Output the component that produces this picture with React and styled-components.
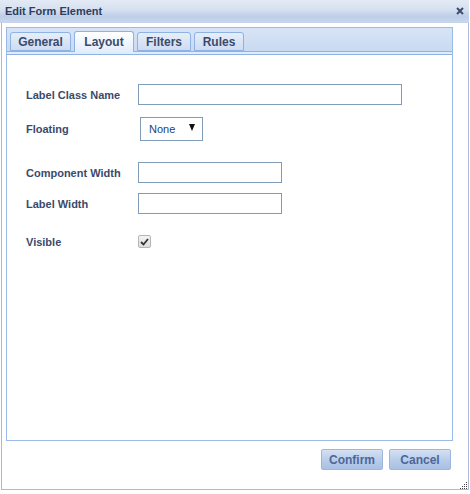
import React from "react";
import styled, { createGlobalStyle } from "styled-components";

const Global = createGlobalStyle`
  html, body { margin: 0; padding: 0; background: #fff; }
  body { font-family: "Liberation Sans", Arial, sans-serif; font-size: 11px; }
`;

const Window = styled.div`
  width: 469px;
  height: 490px;
  display: flex;
  flex-direction: column;
  box-sizing: border-box;
  position: relative;
`;

const TitleBar = styled.div`
  height: 22px;
  display: flex;
  align-items: center;
  justify-content: space-between;
  padding: 0 4px 0 5px;
  background: linear-gradient(#e3eaf5 0%, #d6e0f0 45%, #bdcee8 75%, #c9d7ed 100%);
  border-bottom: 1px solid #c7d5ea;
  color: #2e3d5c;
  font-weight: bold;
  font-size: 11px;
`;

const Close = styled.span`
  width: 8px;
  height: 8px;
  margin-right: 1px;
  display: flex;
`;

const Frame = styled.div`
  flex: 1;
  margin: 0 0 0 1px;
  border: 1px solid #a9bad3;
  border-top: none;
  display: flex;
  flex-direction: column;
  padding: 4px 15px 0 4px;
  background: #fff;
`;

const TabPanel = styled.div`
  height: 412px;
  display: flex;
  flex-direction: column;
  border: 1px solid #99bbe8;
`;

const Strip = styled.div`
  height: 21px;
  padding: 2px 0 0 3px;
  display: flex;
  align-items: flex-end;
  gap: 3px;
  background: linear-gradient(#d7e4f5, #c9daf2);
  border-bottom: 1px solid #8db2e3;
`;

const Tab = styled.div`
  width: ${(p) => p.$w}px;
  height: ${(p) => (p.$active ? "21px" : "19px")};
  margin-bottom: ${(p) => (p.$active ? "-1px" : "0")};
  display: flex;
  align-items: center;
  justify-content: center;
  box-sizing: border-box;
  border: 1px solid #8db2e3;
  border-bottom: ${(p) => (p.$active ? "none" : "1px solid #8db2e3")};
  border-radius: 3px 3px 0 0;
  background: ${(p) =>
    p.$active
      ? "linear-gradient(#ffffff, #e3edfb)"
      : "linear-gradient(#e6eefa, #cddcf3)"};
  color: #3b4a6a;
  font-weight: bold;
  font-size: 12px;
`;

const Spacer = styled.div`
  height: 2px;
  background: #deecfd;
  border-bottom: 1px solid #8db2e3;
`;

const Body = styled.div`
  flex: 1;
  padding: 29px 0 0 19px;
  display: flex;
  flex-direction: column;
`;

const Row = styled.div`
  display: flex;
  align-items: center;
  height: ${(p) => p.$h}px;
  margin-bottom: ${(p) => p.$mb || 0}px;
`;

const Label = styled.label`
  width: 112px;
  color: #3b4a6a;
  font-weight: bold;
  font-size: 11px;
`;

const Input = styled.input`
  width: ${(p) => p.$w}px;
  height: 21px;
  box-sizing: border-box;
  border: 1px solid #7f9db9;
  padding: 0 3px;
  margin: 0;
  outline: none;
  font: 11px "Liberation Sans", Arial, sans-serif;
`;

const Select = styled.div`
  width: 63px;
  height: 24px;
  margin-left: 2px;
  box-sizing: border-box;
  border: 1px solid #7f9db9;
  display: flex;
  align-items: center;
  justify-content: space-between;
  padding: 0 7px 1px 8px;
  color: #1e3f7c;
  font-size: 11px;
`;

const Arrow = styled.span`
  width: 0;
  height: 0;
  border-left: 3.5px solid transparent;
  border-right: 3.5px solid transparent;
  border-top: 7px solid #111;
  margin-top: -2px;
`;

const Check = styled.span`
  width: 11px;
  height: 11px;
  border: 1px solid #b5b5b5;
  border-radius: 2px;
  background: linear-gradient(#f4f4f4, #dcdcdc);
  display: flex;
  align-items: center;
  justify-content: center;
`;

const Footer = styled.div`
  display: flex;
  justify-content: flex-end;
  gap: 6px;
  padding: 8px 2px 0 0;
`;

const Button = styled.button`
  width: 62px;
  height: 21px;
  border: 1px solid #9fb6dc;
  border-radius: 2px;
  background: linear-gradient(#d5e1f3 0%, #bccfeb 45%, #a9c0e4 100%);
  color: #4d6699;
  font: bold 12px "Liberation Sans", Arial, sans-serif;
  padding: 0;
`;

const Grip = styled.svg`
  position: absolute;
  right: 1px;
  bottom: 1px;
`;

export default function App() {
  return (
    <>
      <Global />
      <Window>
        <TitleBar>
          <span>Edit Form Element</span>
          <Close>
            <svg width="8" height="8" viewBox="0 0 8 8">
              <path d="M1 1 L7 7 M7 1 L1 7" stroke="#3d4c6c" strokeWidth="2" />
            </svg>
          </Close>
        </TitleBar>
        <Frame>
          <TabPanel>
            <Strip>
              <Tab $w={61}>General</Tab>
              <Tab $w={60} $active>Layout</Tab>
              <Tab $w={54}>Filters</Tab>
              <Tab $w={50}>Rules</Tab>
            </Strip>
            <Spacer />
            <Body>
              <Row $h={21} $mb={12}>
                <Label>Label Class Name</Label>
                <Input $w={264} />
              </Row>
              <Row $h={24} $mb={21}>
                <Label>Floating</Label>
                <Select>
                  None <Arrow />
                </Select>
              </Row>
              <Row $h={21} $mb={10}>
                <Label>Component Width</Label>
                <Input $w={144} />
              </Row>
              <Row $h={21} $mb={21}>
                <Label>Label Width</Label>
                <Input $w={144} />
              </Row>
              <Row $h={13}>
                <Label>Visible</Label>
                <Check>
                  <svg width="9" height="8" viewBox="0 0 9 8">
                    <path d="M1 4 L3.5 6.5 L8 1" stroke="#333" strokeWidth="1.8" fill="none" />
                  </svg>
                </Check>
              </Row>
            </Body>
          </TabPanel>
          <Footer>
            <Button>Confirm</Button>
            <Button>Cancel</Button>
          </Footer>
        </Frame>
        <Grip width="8" height="8" viewBox="0 0 8 8">
          <rect x="6" y="1" width="1" height="1" fill="#444" />
          <rect x="4" y="3" width="1" height="1" fill="#444" />
          <rect x="6" y="3" width="1" height="1" fill="#444" />
          <rect x="2" y="5" width="1" height="1" fill="#444" />
          <rect x="4" y="5" width="1" height="1" fill="#444" />
          <rect x="6" y="5" width="1" height="1" fill="#444" />
          <rect x="0" y="7" width="1" height="1" fill="#444" />
          <rect x="2" y="7" width="1" height="1" fill="#444" />
          <rect x="4" y="7" width="1" height="1" fill="#444" />
          <rect x="6" y="7" width="1" height="1" fill="#444" />
        </Grip>
      </Window>
    </>
  );
}
